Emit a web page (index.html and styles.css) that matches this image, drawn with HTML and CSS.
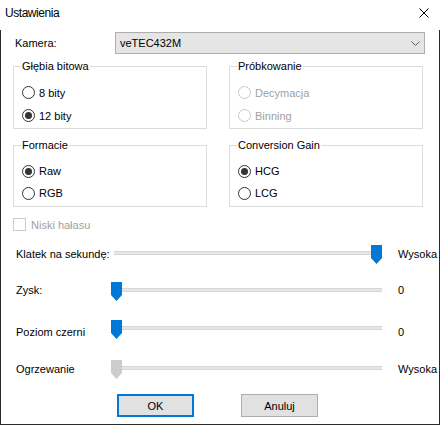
FILE: index.html
```html
<!DOCTYPE html>
<html lang="pl">
<head>
<meta charset="utf-8">
<title>Ustawienia</title>
<link rel="stylesheet" href="styles.css">
</head>
<body>
<div class="window">
  <div class="titlebar">
    <span class="title">Ustawienia</span>
    <svg class="close" width="10" height="10" viewBox="0 0 10 10"><path d="M0.5 0.5 L9.5 9.5 M9.5 0.5 L0.5 9.5" stroke="#000" stroke-width="1" fill="none"/></svg>
  </div>
  <div class="client">
    <div class="camera-row">
      <span class="label">Kamera:</span>
      <div class="combo">
        <span class="combo-text">veTEC432M</span>
        <svg class="chevron" width="9" height="5" viewBox="0 0 9 5"><path d="M0.5 0.5 L4.5 4.5 L8.5 0.5" stroke="#606060" stroke-width="1" fill="none"/></svg>
      </div>
    </div>

    <div class="groups">
      <fieldset class="group g1">
        <legend>Głębia bitowa</legend>
        <div class="radio r23"><span class="circle"></span>8 bity</div>
        <div class="radio r23"><span class="circle checked"></span>12 bity</div>
      </fieldset>
      <fieldset class="group g1">
        <legend>Próbkowanie</legend>
        <div class="radio r23 disabled"><span class="circle"></span>Decymacja</div>
        <div class="radio r23 disabled"><span class="circle"></span>Binning</div>
      </fieldset>
      <fieldset class="group g2">
        <legend>Formacie</legend>
        <div class="radio r22"><span class="circle checked"></span>Raw</div>
        <div class="radio r22"><span class="circle"></span>RGB</div>
      </fieldset>
      <fieldset class="group g2">
        <legend>Conversion Gain</legend>
        <div class="radio r22"><span class="circle checked"></span>HCG</div>
        <div class="radio r22"><span class="circle"></span>LCG</div>
      </fieldset>
    </div>

    <div class="check-row disabled"><span class="box"></span>Niski hałasu</div>

    <div class="sliders">
      <div class="srow s1">
        <span class="slabel">Klatek na sekundę:</span>
        <div class="track"><svg class="thumb" style="left:257px" width="11" height="19" viewBox="0 0 11 19"><polygon points="0,0 11,0 11,13 5.5,19 0,13" fill="#0078d7"/></svg></div>
        <span class="sval">Wysoka</span>
      </div>
      <div class="srow s2">
        <span class="slabel">Zysk:</span>
        <div class="track"><svg class="thumb" style="left:-3px" width="11" height="19" viewBox="0 0 11 19"><polygon points="0,0 11,0 11,13 5.5,19 0,13" fill="#0078d7"/></svg></div>
        <span class="sval">0</span>
      </div>
      <div class="srow s3 low">
        <span class="slabel">Poziom czerni</span>
        <div class="track"><svg class="thumb" style="left:-3px" width="11" height="19" viewBox="0 0 11 19"><polygon points="0,0 11,0 11,13 5.5,19 0,13" fill="#0078d7"/></svg></div>
        <span class="sval">0</span>
      </div>
      <div class="srow s4">
        <span class="slabel">Ogrzewanie</span>
        <div class="track"><svg class="thumb" style="left:-3px" width="11" height="19" viewBox="0 0 11 19"><polygon points="0,0 11,0 11,13 5.5,19 0,13" fill="#cccccc"/></svg></div>
        <span class="sval">Wysoka</span>
      </div>
    </div>

    <div class="buttons">
      <button class="btn default">OK</button>
      <button class="btn">Anuluj</button>
    </div>
  </div>
</div>
</body>
</html>
```

FILE: styles.css
```css
* { box-sizing: border-box; }
html, body { margin: 0; padding: 0; background: #fff; }
body {
  width: 440px;
  height: 425px;
  font-family: "Liberation Sans", Arial, sans-serif;
  font-size: 11px;
  color: #000;
  overflow: hidden;
}
.window { width: 440px; height: 425px; background: #fff; display: flex; flex-direction: column; }

.titlebar {
  height: 30px;
  display: flex;
  align-items: flex-start;
  justify-content: space-between;
  padding: 0 11px 0 5px;
}
.title { font-size: 12px; letter-spacing: -0.45px; line-height: 14px; margin-top: 6px; }
.close { margin-top: 8px; display: block; }

.client {
  flex: 1;
  border-left: 1px solid #2b2b2b;
  border-right: 1px solid #2b2b2b;
  border-bottom: 1px solid #2b2b2b;
  display: flex;
  flex-direction: column;
}

.camera-row {
  margin-top: 2px;
  display: grid;
  grid-template-columns: 100px 310px;
  padding-left: 14px;
  height: 22px;
  align-items: center;
}
.combo {
  height: 22px;
  background: #e5e5e5;
  border: 1px solid #adadad;
  display: flex;
  align-items: center;
  justify-content: space-between;
  padding: 0 4px 0 4px;
}
.combo-text { line-height: 13px; }
.chevron { display: block; margin-right: 0; }

.groups {
  margin: 6px 0 0 12px;
  display: grid;
  grid-template-columns: 194px 194px;
  column-gap: 22px;
  row-gap: 10px;
}
.group {
  margin: 0;
  border: 1px solid #dcdcdc;
  padding: 8px 8px 0 8px;
  min-width: 0;
}
.group legend {
  padding: 0 1px;
  margin-left: -1px;
  line-height: 13px;
}
.g1 { height: 69px; }
.g2 { height: 68px; }

.radio { display: flex; align-items: center; }
.r23 { height: 23px; }
.r22 { height: 22px; }
.circle {
  width: 13px;
  height: 13px;
  border: 1px solid #333;
  border-radius: 50%;
  margin-right: 4px;
  display: flex;
  align-items: center;
  justify-content: center;
  background: #fff;
}
.circle.checked::after {
  content: "";
  width: 7px;
  height: 7px;
  border-radius: 50%;
  background: #333;
}
.radio.disabled { color: #a0a0a0; }
.radio.disabled .circle { border-color: #c8c8c8; }

.check-row {
  margin: 10px 0 0 12px;
  height: 15px;
  display: flex;
  align-items: center;
}
.check-row .box {
  width: 13px;
  height: 13px;
  border: 1px solid #cccccc;
  margin-right: 5px;
}
.check-row.disabled { color: #a0a0a0; }

.sliders {
  margin-top: 11px;
  display: flex;
  flex-direction: column;
}
.srow {
  height: 20px;
  display: grid;
  grid-template-columns: 98px 268px 1fr;
  align-items: center;
  padding-left: 15px;
}
.s1 { margin-bottom: 17px; }
.s2 { margin-bottom: 18px; }
.s3 { margin-bottom: 20px; }
.slabel, .sval { line-height: 13px; white-space: nowrap; }
.sval { padding-left: 16px; }
.srow.low .slabel, .srow.low .sval { position: relative; top: 4px; }
.srow.s1 .slabel, .srow.s1 .sval, .srow.s4 .slabel, .srow.s4 .sval { position: relative; top: 1px; }

.track {
  position: relative;
  height: 4px;
  background: #e7e7e7;
  border-top: 1px solid #d6d6d6;
  border-bottom: 1px solid #d6d6d6;
}
.thumb { position: absolute; top: -7px; display: block; }

.buttons {
  margin-top: 16px;
  padding-left: 116px;
  display: flex;
  gap: 47px;
}
.btn {
  width: 77px;
  height: 23px;
  background: #e1e1e1;
  border: 1px solid #adadad;
  font-family: "Liberation Sans", Arial, sans-serif;
  font-size: 11px;
  color: #000;
  padding: 0;
  margin: 0;
}
.btn.default { border: 2px solid #0078d7; }
```
